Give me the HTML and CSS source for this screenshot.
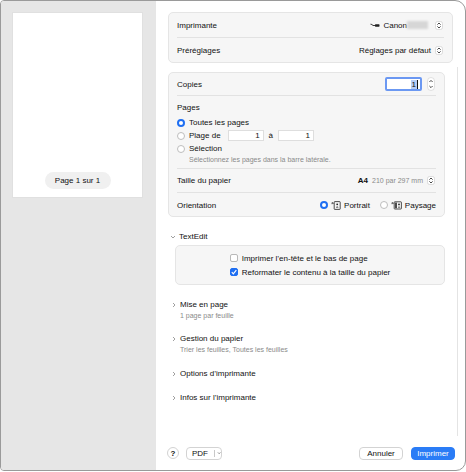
FILE: index.html
```html
<!DOCTYPE html>
<html lang="fr">
<head>
<meta charset="utf-8">
<link rel="stylesheet" href="styles.css">
</head>
<body>
<div class="window">
  <aside class="sidebar">
    <div class="paper"><div class="pill">Page 1 sur 1</div></div>
  </aside>
  <main class="panel">
    <section class="box top-box">
      <div class="row sep">
        <span>Imprimante</span>
        <span class="value">
          <svg class="printer-ico" width="10" height="5" viewBox="0 0 10 5"><path d="M0.5 1.2 Q2 1.2 3 2.5 L5 2.5" fill="none" stroke="#222" stroke-width="0.9"/><rect x="5" y="1.3" width="4.5" height="2.4" rx="0.6" fill="#222"/></svg>
          Canon<span class="blur"></span>
          <svg class="stepper" width="8" height="9" viewBox="0 0 8 9"><rect x="0.5" y="0.5" width="7" height="8" rx="2" fill="#fff" stroke="#cfcfcf" stroke-width="0.7"/><path d="M2.4 3.6 L4 2 L5.6 3.6 M2.4 5.4 L4 7 L5.6 5.4" fill="none" stroke="#333" stroke-width="0.9"/></svg>
        </span>
      </div>
      <div class="row">
        <span>Préréglages</span>
        <span class="value">Réglages par défaut
          <svg class="stepper" width="8" height="9" viewBox="0 0 8 9"><rect x="0.5" y="0.5" width="7" height="8" rx="2" fill="#fff" stroke="#cfcfcf" stroke-width="0.7"/><path d="M2.4 3.6 L4 2 L5.6 3.6 M2.4 5.4 L4 7 L5.6 5.4" fill="none" stroke="#333" stroke-width="0.9"/></svg>
        </span>
      </div>
    </section>

    <div class="scroll">
      <section class="box main-box">
        <div class="row copies sep">
          <span>Copies</span>
          <span class="value">
            <span class="num-field focus"><span class="sel">1</span></span>
            <svg class="stepper-tall" width="8" height="14" viewBox="0 0 8 14"><rect x="0.5" y="0.5" width="7" height="13" rx="3.5" fill="#fff" stroke="#d4d4d4" stroke-width="0.7"/><path d="M2.4 5 L4 3.4 L5.6 5 M2.4 9 L4 10.6 L5.6 9" fill="none" stroke="#333" stroke-width="0.9"/></svg>
          </span>
        </div>
        <div class="pages sep">
          <div class="label">Pages</div>
          <div class="radio-row"><span class="radio on"></span>Toutes les pages</div>
          <div class="radio-row"><span class="radio"></span>Plage de<span class="num-field range">1</span><span class="a">à</span><span class="num-field range second">1</span></div>
          <div class="radio-row"><span class="radio"></span>Sélection</div>
          <div class="hint">Sélectionnez les pages dans la barre latérale.</div>
        </div>
        <div class="row sep tall">
          <span>Taille du papier</span>
          <span class="value"><b class="a4">A4</b><span class="dim">210 par 297 mm</span>
            <svg class="stepper" width="8" height="9" viewBox="0 0 8 9"><rect x="0.5" y="0.5" width="7" height="8" rx="2" fill="#fff" stroke="#cfcfcf" stroke-width="0.7"/><path d="M2.4 3.6 L4 2 L5.6 3.6 M2.4 5.4 L4 7 L5.6 5.4" fill="none" stroke="#333" stroke-width="0.9"/></svg>
          </span>
        </div>
        <div class="row tall">
          <span>Orientation</span>
          <span class="value orient">
            <span class="radio on"></span>
            <svg class="or-ico" width="10" height="9" viewBox="0 0 10 9"><path d="M0.3 2.2 L2.2 2.2 M1.3 1.2 L2.3 2.2 L1.3 3.2" fill="none" stroke="#222" stroke-width="0.7"/><rect x="3.2" y="0.6" width="6" height="7.8" rx="0.6" fill="none" stroke="#222" stroke-width="0.8"/><circle cx="6.2" cy="3.3" r="0.9" fill="#222"/><path d="M4.8 6.6 Q6.2 4.6 7.6 6.6 Z" fill="#222"/></svg>
            <span class="or-label">Portrait</span>
            <span class="radio"></span>
            <svg class="or-ico" width="11" height="9" viewBox="0 0 11 9"><path d="M0.3 2.2 L2.2 2.2 M1.3 1.2 L2.3 2.2 L1.3 3.2" fill="none" stroke="#222" stroke-width="0.7"/><rect x="3.2" y="0.8" width="7.2" height="7.2" rx="0.6" fill="none" stroke="#222" stroke-width="0.8"/><rect x="4.2" y="1.6" width="1.6" height="5.6" fill="#222"/><circle cx="8" cy="3.4" r="0.9" fill="#222"/><path d="M6.8 6.6 Q8 4.6 9.3 6.6 Z" fill="#222"/></svg>
            <span>Paysage</span>
          </span>
        </div>
      </section>

      <div class="group-title">
        <svg class="chev" width="6" height="6" viewBox="0 0 6 6"><path d="M1 2 L3 4 L5 2" fill="none" stroke="#888" stroke-width="0.8"/></svg>
        TextEdit
      </div>
      <section class="box te-box">
        <div class="checks">
          <div class="check-row"><span class="checkbox"></span>Imprimer l’en-tête et le bas de page</div>
          <div class="check-row"><span class="checkbox on"><svg width="8" height="8" viewBox="0 0 8 8"><path d="M1.8 4.2 L3.3 5.8 L6.3 2.2" fill="none" stroke="#fff" stroke-width="1.2"/></svg></span>Reformater le contenu à la taille du papier</div>
        </div>
      </section>

      <div class="disclosure first">
        <div class="d-title"><svg class="chev" width="6" height="6" viewBox="0 0 6 6"><path d="M2 1 L4 3 L2 5" fill="none" stroke="#888" stroke-width="0.8"/></svg>Mise en page</div>
        <div class="d-sub">1 page par feuille</div>
      </div>
      <div class="disclosure">
        <div class="d-title"><svg class="chev" width="6" height="6" viewBox="0 0 6 6"><path d="M2 1 L4 3 L2 5" fill="none" stroke="#888" stroke-width="0.8"/></svg>Gestion du papier</div>
        <div class="d-sub">Trier les feuilles, Toutes les feuilles</div>
      </div>
      <div class="disclosure">
        <div class="d-title"><svg class="chev" width="6" height="6" viewBox="0 0 6 6"><path d="M2 1 L4 3 L2 5" fill="none" stroke="#888" stroke-width="0.8"/></svg>Options d’imprimante</div>
      </div>
      <div class="disclosure">
        <div class="d-title"><svg class="chev" width="6" height="6" viewBox="0 0 6 6"><path d="M2 1 L4 3 L2 5" fill="none" stroke="#888" stroke-width="0.8"/></svg>Infos sur l’imprimante</div>
      </div>
    </div>

    <footer class="footer">
      <div class="left">
        <span class="help">?</span>
        <span class="btn pdf">PDF<span class="divider"></span><svg width="6" height="6" viewBox="0 0 6 6"><path d="M1.3 2.2 L3 3.9 L4.7 2.2" fill="none" stroke="#333" stroke-width="0.8"/></svg></span>
      </div>
      <div class="right">
        <span class="btn">Annuler</span>
        <span class="btn primary">Imprimer</span>
      </div>
    </footer>
  </main>
</div>
</body>
</html>
```

FILE: styles.css
```css
* { box-sizing: border-box; }
html, body { margin: 0; padding: 0; background: #fff; }
body {
  font-family: "Liberation Sans", Arial, sans-serif;
  font-size: 8px;
  color: #111;
  width: 466px;
  height: 472px;
}
.window {
  width: 466px;
  height: 471px;
  border: 1px solid #9a9a9a;
  border-radius: 4px 11px 10px 4px;
  overflow: hidden;
  display: flex;
  background: #fff;
}
.sidebar {
  width: 155px;
  flex: none;
  background: #e6e6e6;
  padding: 11px 0 0 11px;
}
.paper {
  width: 131px;
  height: 186px;
  background: #fff;
  border: 1px solid #e0e0e0;
  display: flex;
  flex-direction: column;
  justify-content: flex-end;
  align-items: center;
  padding-bottom: 8px;
}
.pill {
  width: 66px;
  height: 17px;
  border-radius: 9px;
  background: #f0f0f0;
  display: flex;
  align-items: center;
  justify-content: center;
  color: #111;
}
.panel {
  flex: 1;
  display: flex;
  flex-direction: column;
  min-width: 0;
}
.box {
  background: #f6f6f6;
  border: 1px solid #e5e5e5;
  border-radius: 5px;
  padding: 0 8px;
}
.top-box {
  margin: 11px 12px 0 12px;
  height: 51px;
}
.row {
  display: flex;
  align-items: center;
  justify-content: space-between;
  height: 24px;
}
.top-box .row:first-child { height: 25px; }
.sep { border-bottom: 1px solid #e2e2e2; }
.value {
  display: flex;
  align-items: center;
}
.printer-ico { margin-right: 3px; }
.blur {
  display: inline-block;
  width: 21px;
  height: 8px;
  background: #d6d6d6;
  filter: blur(1px);
  margin-right: 3px;
}
.stepper { margin-left: 4px; margin-right: 1px; }
.scroll {
  margin-top: 4px;
  height: 369px;
  margin-right: 7px;
  border-right: 1px solid #e4e4e4;
  overflow: hidden;
}
.main-box {
  margin: 5px 12px 0 12px;
  height: 145px;
}
.copies { height: 23px; }
.tall { height: 24px; }
.num-field {
  display: inline-flex;
  align-items: center;
  justify-content: flex-end;
  background: #fff;
  color: #111;
}
.focus {
  width: 37px;
  height: 14px;
  border: 2px solid #6b98f2;
  border-radius: 2px;
  padding-right: 2px;
  margin-right: 5px;
}
.sel {
  background: #b7cdf6;
  padding: 0 1px;
  line-height: 9px;
  border-right: 1px solid #111;
}
.stepper-tall { margin-right: 1px; }
.pages {
  padding: 6px 0 4px 0;
  height: 73px;
}
.label { line-height: 12px; margin-bottom: 2px; }
.radio-row {
  display: flex;
  align-items: center;
  height: 13px;
}
.radio {
  display: inline-block;
  width: 8px;
  height: 8px;
  border-radius: 50%;
  background: #fff;
  border: 1px solid #bdbdbd;
  margin-right: 4px;
  flex: none;
}
.radio.on {
  border: 2.6px solid #1f6ff2;
  background: #fff;
}
.range {
  width: 36px;
  height: 11px;
  border: 1px solid #dedede;
  padding-right: 3px;
  margin-left: 7px;
}
.range.second { margin-left: 0; }
.a { margin-left: 5px; margin-right: 5px; }
.hint {
  font-size: 7px;
  color: #8a8a8a;
  line-height: 9px;
  padding-left: 12px;
}
.a4 { font-weight: bold; margin-right: 4px; }
.dim { font-size: 7px; color: #8a8a8a; }
.orient .radio { margin-right: 3px; }
.or-ico { margin-right: 3px; }
.or-label { margin-right: 10px; }
.group-title {
  margin-top: 14px;
  line-height: 12px;
  padding-left: 14px;
  display: flex;
  align-items: center;
}
.chev { margin-right: 3px; flex: none; }
.te-box {
  margin: 2px 12px 0 19px;
  height: 40px;
  padding: 5px 0 4px 0;
  display: flex;
  justify-content: center;
}
.check-row {
  display: flex;
  align-items: center;
  height: 14px;
}
.checkbox {
  width: 8px;
  height: 8px;
  border: 1px solid #b9b9b9;
  border-radius: 2px;
  background: #fff;
  margin-right: 4px;
  display: inline-flex;
  flex: none;
}
.checkbox.on {
  background: #1f6ff2;
  border-color: #1f6ff2;
  align-items: center;
  justify-content: center;
}
.checkbox.on svg { flex: none; }
.disclosure {
  padding-left: 15px;
  margin-top: 12px;
}
.disclosure.first { margin-top: 14px; }
.disclosure + .disclosure + .disclosure { margin-top: 13px; }
.disclosure + .disclosure + .disclosure + .disclosure { margin-top: 12px; }
.d-title {
  display: flex;
  align-items: center;
  line-height: 12px;
}
.d-sub {
  font-size: 7px;
  color: #8a8a8a;
  line-height: 10px;
  padding-left: 9px;
}
.footer {
  flex: 1;
  display: flex;
  align-items: center;
  justify-content: space-between;
  padding: 0 10px 0 11px;
}
.left, .right { display: flex; align-items: center; }
.help {
  width: 12px;
  height: 12px;
  border-radius: 50%;
  border: 1px solid #d2d2d2;
  background: #fff;
  display: inline-flex;
  align-items: center;
  justify-content: center;
  font-weight: bold;
  font-size: 8px;
  margin-right: 7px;
}
.btn {
  height: 13px;
  border-radius: 4px;
  background: #fff;
  border: 1px solid #d3d3d3;
  display: inline-flex;
  align-items: center;
  justify-content: center;
  width: 44px;
}
.pdf {
  width: 36px;
  justify-content: flex-start;
  padding-left: 5px;
}
.divider {
  width: 1px;
  height: 7px;
  background: #c8c8c8;
  margin: 0 2px 0 6px;
}
.right .btn + .btn { margin-left: 8px; }
.primary {
  background: #2a7cf6;
  border-color: #2a7cf6;
  color: #fff;
}
```
